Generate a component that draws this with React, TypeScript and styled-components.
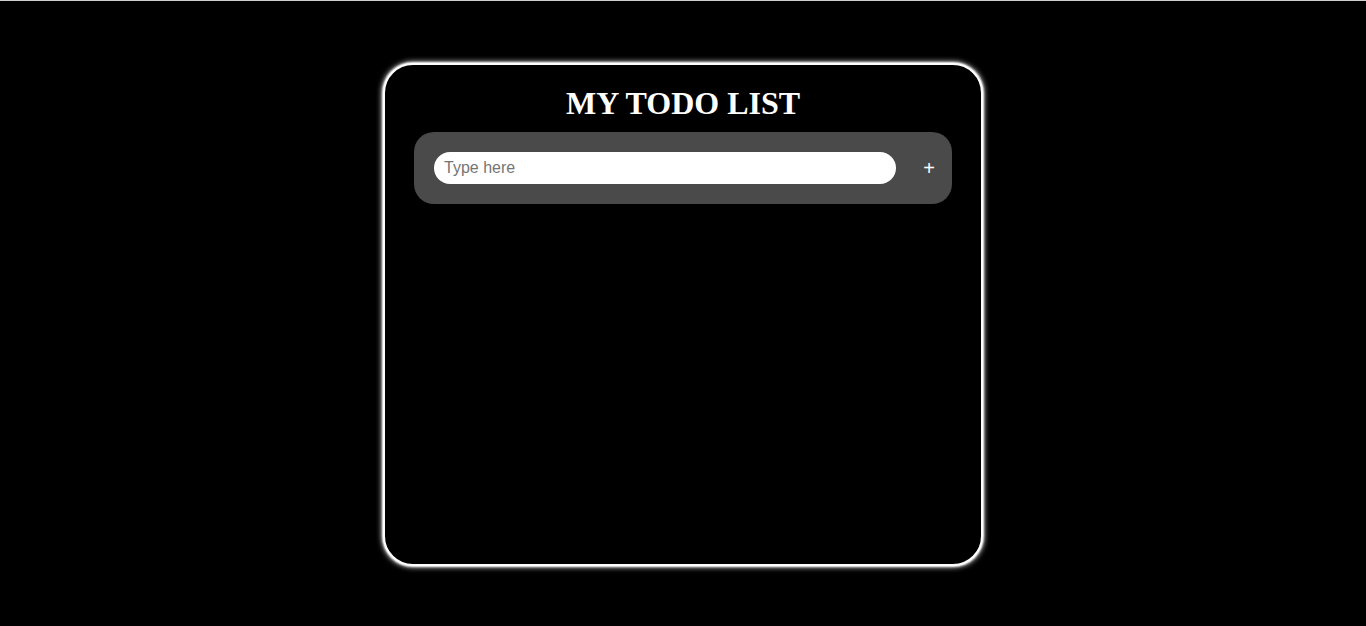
import styled, { createGlobalStyle } from "styled-components";
import { useState } from "react";

const GlobalStyle = createGlobalStyle`
  * {
    box-sizing: border-box;
  }
  html,
  body {
    margin: 0;
    padding: 0;
    background: #000;
  }
  body {
    border-top: 1px solid #cfcfcf;
    min-height: 626px;
    font-family: "Liberation Serif", "Times New Roman", serif;
  }
`;

const App = () => {
  const [text, setText] = useState("");
  const [todos, setTodos] = useState<string[]>([]);

  const addTodo = () => {
    if (!text.trim()) return;
    setTodos([...todos, text.trim()]);
    setText("");
  };

  return (
    <Page>
      <GlobalStyle />
      <Card>
        <Title>MY TODO LIST</Title>
        <InputBar>
          <TodoInput
            placeholder="Type here"
            value={text}
            onChange={(e) => setText(e.target.value)}
            onKeyDown={(e) => e.key === "Enter" && addTodo()}
          />
          <AddButton onClick={addTodo}>+</AddButton>
        </InputBar>
        <List>
          {todos.map((todo, i) => (
            <Item key={i}>{todo}</Item>
          ))}
        </List>
      </Card>
    </Page>
  );
};

const Page = styled.div`
  display: flex;
  justify-content: center;
  padding-top: 62px;
`;

const Card = styled.div`
  width: 600px;
  height: 503px;
  border: 2px solid #fff;
  border-radius: 30px;
  background: #000;
  box-shadow: 0 0 5px 2px rgba(255, 255, 255, 0.6),
    0 0 2px 1px rgba(255, 255, 255, 0.9);
  padding: 20px 29px 19px;
  display: flex;
  flex-direction: column;
`;

const Title = styled.h1`
  margin: 0 0 10px 0;
  color: #fff;
  text-align: center;
  font-family: "Liberation Serif", "Times New Roman", serif;
  font-size: 32px;
  font-weight: 700;
  line-height: 37px;
`;

const InputBar = styled.div`
  display: flex;
  align-items: center;
  gap: 18px;
  height: 72px;
  padding: 0 8px 0 20px;
  border-radius: 20px;
  background: #4a4a4a;
`;

const TodoInput = styled.input`
  flex: 1;
  height: 32px;
  border: none;
  outline: none;
  border-radius: 16px;
  background: #fff;
  padding: 0 10px;
  color: #000;
  font-family: "Liberation Sans", Arial, sans-serif;
  font-size: 16px;

  &::placeholder {
    color: #757575;
  }
`;

const AddButton = styled.button`
  width: 30px;
  height: 32px;
  padding: 0;
  border: none;
  background: transparent;
  color: #fff;
  font-family: "Liberation Sans", Arial, sans-serif;
  font-size: 20px;
  line-height: 32px;
  cursor: pointer;
`;

const List = styled.ul`
  list-style: none;
  margin: 16px 0 0 0;
  padding: 0;
`;

const Item = styled.li`
  color: #fff;
  font-family: "Liberation Sans", Arial, sans-serif;
  font-size: 16px;
  padding: 6px 20px;
`;

export default App;
